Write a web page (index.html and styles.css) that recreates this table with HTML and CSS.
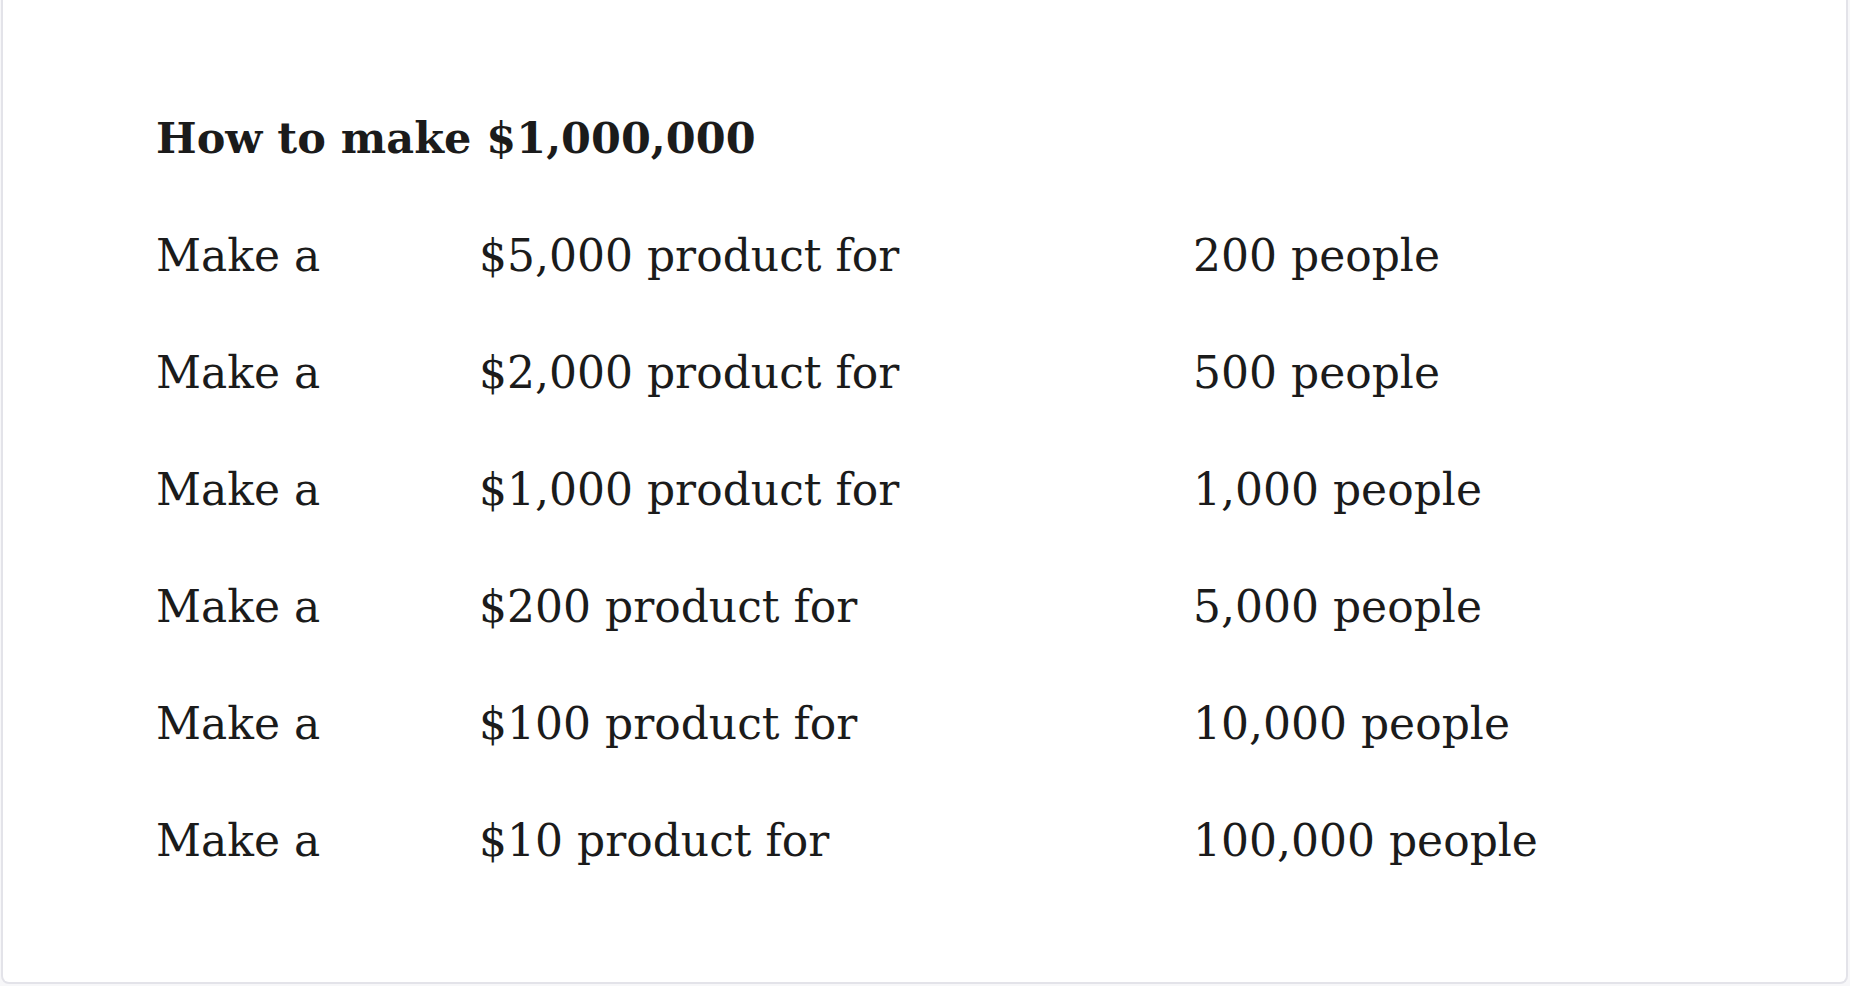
FILE: index.html
```html
<!DOCTYPE html>
<html>
<head>
<meta charset="utf-8">
<link rel="stylesheet" href="styles.css">
</head>
<body>
<div class="card">
  <h2 class="title">How to make $1,000,000</h2>
  <div class="grid">
    <div>Make a</div><div>$5,000 product for</div><div>200 people</div>
    <div>Make a</div><div>$2,000 product for</div><div>500 people</div>
    <div>Make a</div><div>$1,000 product for</div><div>1,000 people</div>
    <div>Make a</div><div>$200 product for</div><div>5,000 people</div>
    <div>Make a</div><div>$100 product for</div><div>10,000 people</div>
    <div>Make a</div><div>$10 product for</div><div>100,000 people</div>
  </div>
</div>
</body>
</html>
```
FILE: styles.css
```css
html, body {
  margin: 0;
  padding: 0;
  background: #f7f7f9;
}
body {
  height: 986px;
  overflow: hidden;
  font-family: "DejaVu Serif", "Liberation Serif", serif;
  color: #1b1b1b;
}
.card {
  box-sizing: border-box;
  margin-left: 1px;
  width: 1847px;
  height: 984px;
  background: #fff;
  border: 2px solid #e3e3e9;
  border-top: none;
  border-radius: 0 0 8px 8px;
  padding: 108px 0 0 153px;
}
.title {
  margin: 0;
  font-size: 43px;
  line-height: 60px;
  font-weight: bold;
}
.grid {
  margin-top: 29px;
  display: grid;
  grid-template-columns: 323px 714px auto;
  grid-auto-rows: 117px;
  font-size: 44px;
  line-height: 117px;
}
```
